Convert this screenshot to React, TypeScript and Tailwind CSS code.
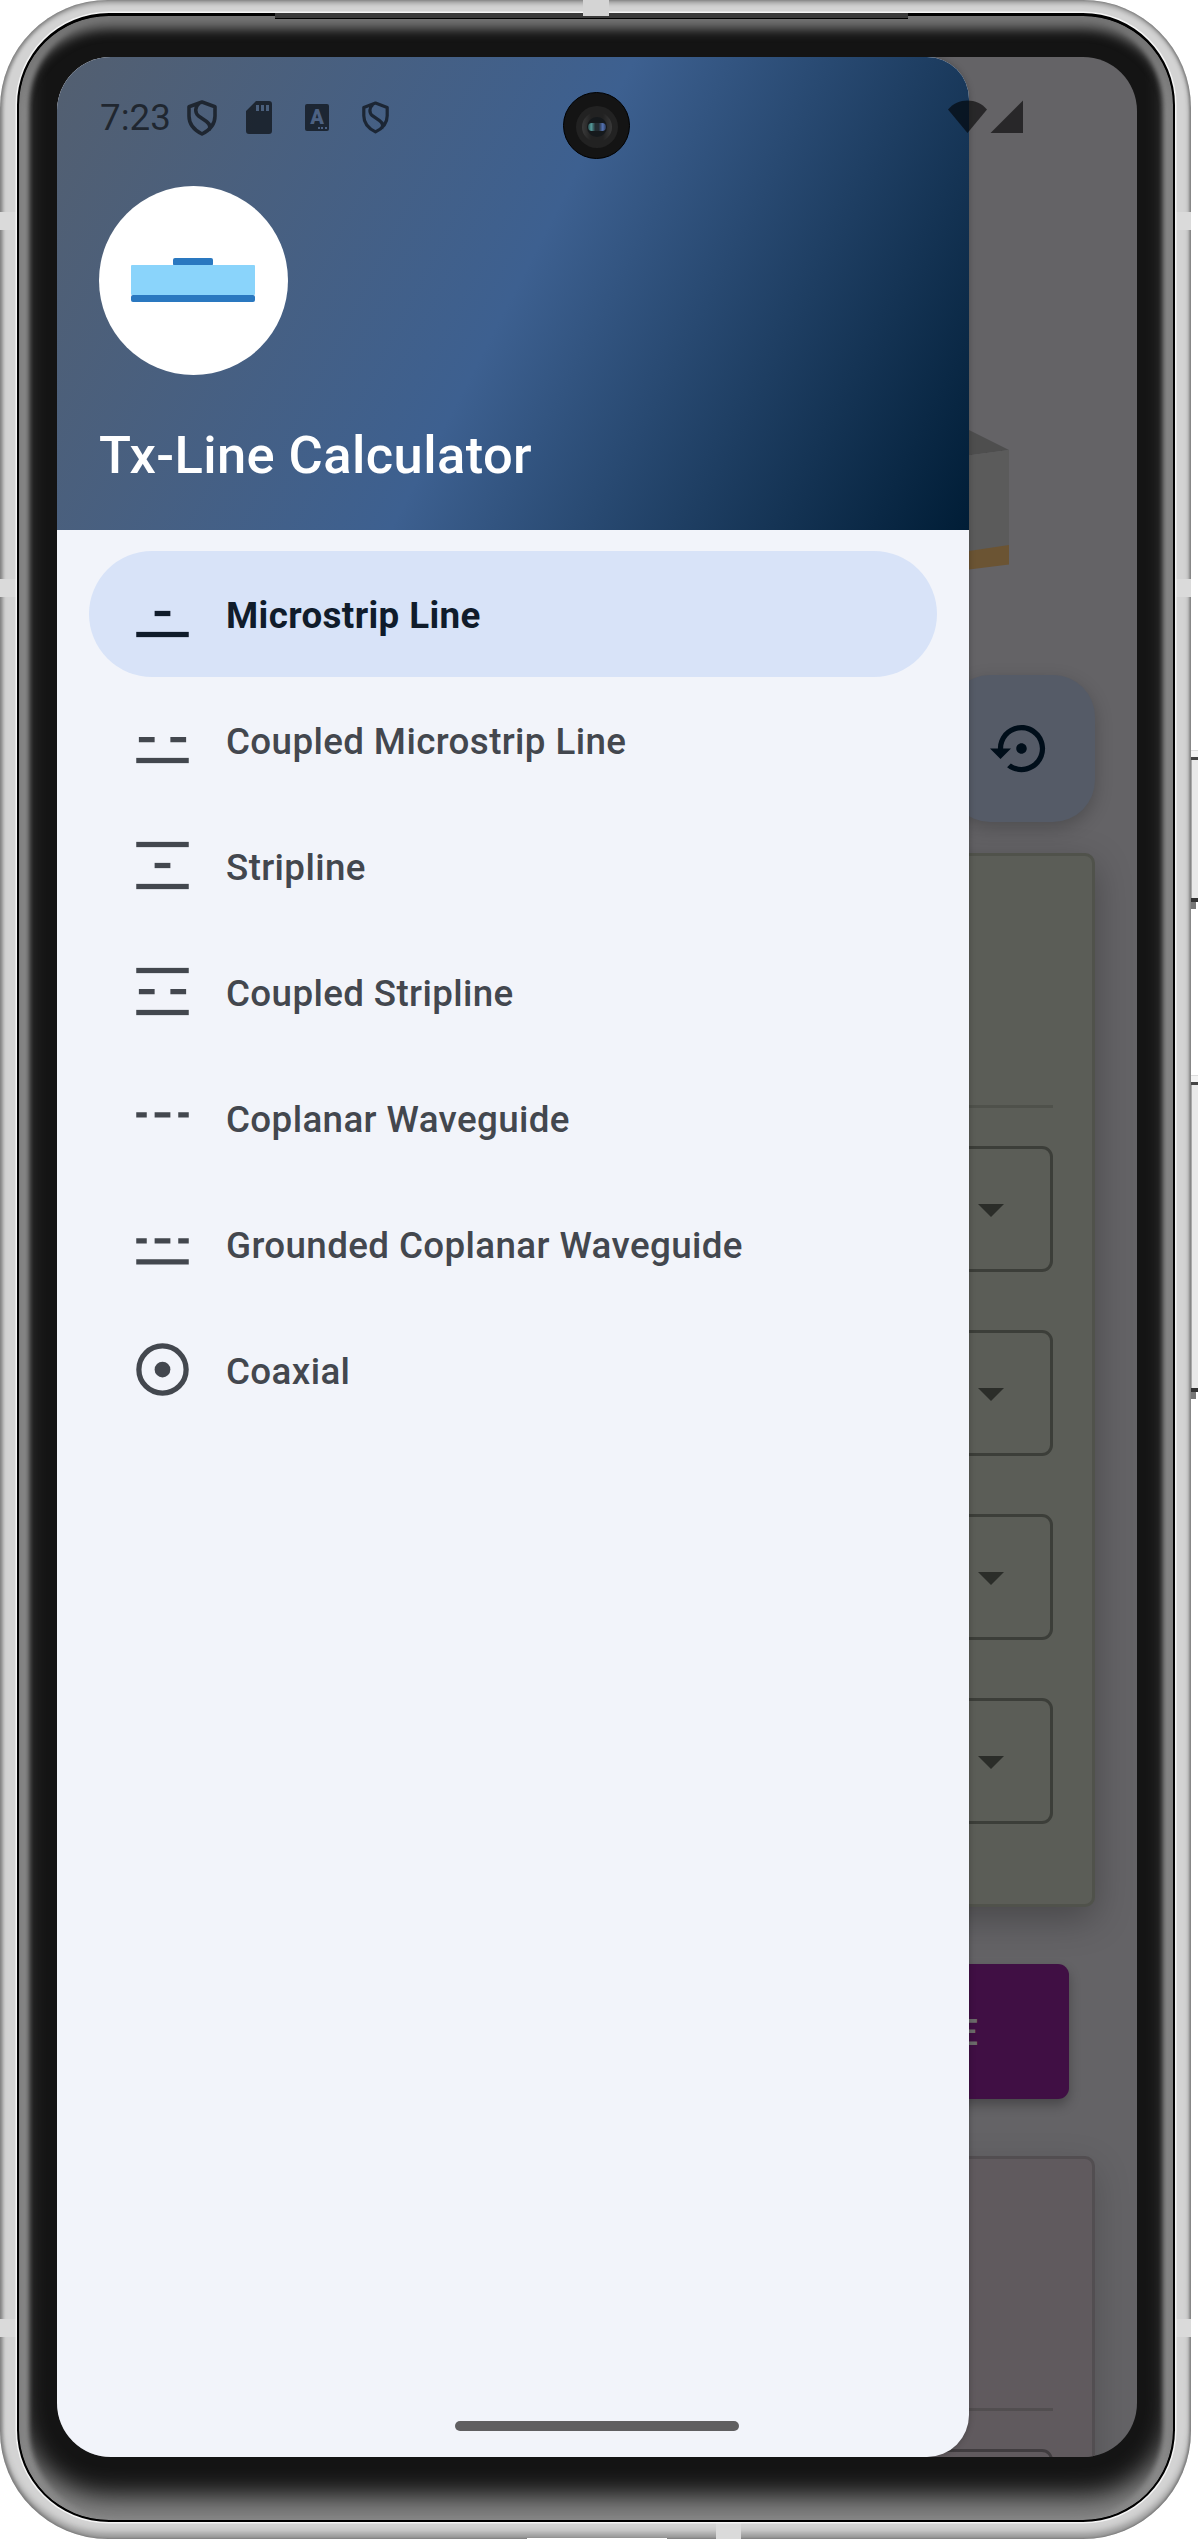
import type { ReactNode } from "react";

type IconProps = { children: ReactNode };

function LineIcon({ children }: IconProps) {
  return (
    <svg viewBox="0 0 24 24" className="-mt-px size-[63px] shrink-0" fill="currentColor">
      {children}
    </svg>
  );
}

const ground = <rect x="2" y="19" width="20" height="2" />;
const roof = <rect x="2" y="3" width="20" height="2" />;
const strip = <rect x="9" y="11" width="6" height="2" />;
const pair = <path d="M3 11h6v2H3zM15 11h6v2h-6z" />;
const coplanar = <path d="M2 10h4v2H2zM9 10h6v2H9zM18 10h4v2h-4z" />;

const items: { label: string; icon: ReactNode }[] = [
  { label: "Microstrip Line", icon: <>{strip}{ground}</> },
  { label: "Coupled Microstrip Line", icon: <>{pair}{ground}</> },
  { label: "Stripline", icon: <>{roof}{strip}{ground}</> },
  { label: "Coupled Stripline", icon: <>{roof}{pair}{ground}</> },
  { label: "Coplanar Waveguide", icon: coplanar },
  {
    label: "Grounded Coplanar Waveguide",
    icon: (
      <>
        {coplanar}
        <rect x="2" y="18" width="20" height="2" />
      </>
    ),
  },
  {
    label: "Coaxial",
    icon: (
      <>
        <circle cx="12" cy="12" r="9" fill="none" stroke="currentColor" strokeWidth="2" />
        <circle cx="12" cy="12" r="3" />
      </>
    ),
  },
];

function Shield({ className }: { className: string }) {
  return (
    <svg viewBox="0 0 30 36" className={className} fill="none" stroke="currentColor" strokeWidth="3.6" strokeLinejoin="round">
      <path d="M15 2 28 6.800V16c0 7.800-5 14-13 18C7 30 2 23.800 2 16V6.800Z M12 3.500C8 7 7.600 12.500 11.500 16l8 5.500c3.600 2.800 4.400 5.300 2.500 8.500" />
    </svg>
  );
}

function StatusBar() {
  return (
    <div className="absolute inset-x-0 top-0 flex h-[122px] pt-[43px] text-black/60">
      <div className="ml-[43px] w-[87px] text-[36.75px] leading-[36px]">7:23</div>
      <Shield className="h-[36px] w-[30px]" />
      <svg viewBox="0 0 26 33" className="ml-[29px] mt-px h-[33px] w-[26px]">
        <path
          fill="currentColor"
          fillRule="evenodd"
          d="M10 0h13a3 3 0 0 1 3 3v27a3 3 0 0 1-3 3H3a3 3 0 0 1-3-3V10ZM10 4v6h3V4Zm5 0v6h3V4Zm5 0v6h3V4Z"
        />
      </svg>
      <div className="relative ml-[33px] mt-[4px] h-[27px] w-[24px] rounded-[2px] bg-black/60">
        <span className="absolute inset-x-0 top-[3px] text-center text-[20px] font-black leading-[20px] text-[#4c6182]">A</span>
        <span className="absolute bottom-[2px] right-[2px] h-[2px] w-[9px] bg-[linear-gradient(90deg,#4c6182_2px,transparent_2px,transparent_3.5px,#4c6182_3.5px,#4c6182_5.5px,transparent_5.5px,transparent_7px,#4c6182_7px)]" />
      </div>
      <Shield className="ml-[33px] mt-px h-[33px] w-[27px]" />
      <svg viewBox="0 0 76 34" className="ml-[559px] h-[34px] w-[76px]" fill="currentColor">
        <path d="M19.500 33 0 9.500C5 3.500 12 .5 19.500.5S34 3.500 39 9.500Z" />
        <path d="M42.500 33 75 .5V33Z" />
      </svg>
    </div>
  );
}

function Camera() {
  return (
    <div className="absolute left-[506px] top-[35px] flex size-[67px] items-center justify-center rounded-full border border-black bg-[#141414] pt-[2px]">
      <div className="flex size-[42px] items-center justify-center rounded-full bg-[#222222]">
        <div className="flex size-[30px] items-center justify-center rounded-full bg-[linear-gradient(90deg,#3a3a3a,#222_30%,#222_70%,#3a3a3a)]">
          <div className="flex size-[20px] items-center justify-center rounded-full bg-[#15191c]">
            <span className="h-[8px] w-[18px] rounded-full bg-[linear-gradient(90deg,#2a4a4a,#559c9d_18%,#232b31_40%,#232b31_60%,#5573b4_82%,#2a3a5a)]" />
          </div>
        </div>
      </div>
    </div>
  );
}

function Field() {
  return (
    <div className="flex h-[126px] shrink-0 items-center justify-end rounded-[11px] border-[3px] border-[#3c3e39] pr-[46px]">
      <svg viewBox="0 0 26 13" className="mt-[3px] h-[13px] w-[26px]">
        <path d="M0 0h26L13 13Z" fill="#2b2d29" />
      </svg>
    </div>
  );
}

function DimmedPage() {
  return (
    <div className="flex h-[2400px] flex-col overflow-hidden bg-[#646366] pl-[41px] pr-[42px]">
      <svg viewBox="0 0 60 144" className="ml-auto mr-[86px] mt-[370px] h-[144px] w-[60px] shrink-0">
        <path d="M0-7 60 23 0 31Z" fill="#4e4e4e" />
        <path d="M0 31 60 23V119L0 127Z" fill="#5b5b5b" />
        <path d="M0 127 60 118V137.500L0 145Z" fill="#6b5433" />
      </svg>
      <div className="ml-auto mt-[104px] flex size-[147px] shrink-0 items-center justify-center rounded-[42px] bg-[#555b67] shadow-[0_6px_18px_rgba(0,0,0,0.22)]">
        <svg viewBox="0 0 24 24" className="size-[63px]" fill="#000e1a">
          <path d="M14 12c0-1.100-.9-2-2-2s-2 .9-2 2 .9 2 2 2 2-.9 2-2zm-2-9c-4.970 0-9 4.030-9 9H0l4 4 4-4H5c0-3.870 3.130-7 7-7s7 3.130 7 7-3.130 7-7 7c-1.510 0-2.910-.49-4.060-1.300l-1.420 1.440C8.040 20.300 9.940 21 12 21c4.970 0 9-4.030 9-9s-4.030-9-9-9z" />
        </svg>
      </div>
      <div className="mt-[31px] flex h-[1054px] shrink-0 flex-col gap-[58px] rounded-[10px] border-[3px] border-[#50524b] bg-[#5b5d57] pl-[40px] pr-[39px] pt-[249px] shadow-[0_12px_36px_rgba(0,0,0,0.28)]">
        <div className="mb-[-20px] h-[3px] shrink-0 bg-[#4f514b]" />
        <Field />
        <Field />
        <Field />
        <Field />
      </div>
      <div className="mx-[26px] mt-[57px] flex h-[135px] shrink-0 items-center justify-end rounded-[11px] bg-[#400f44] pr-[91px] pt-[3px] text-[36.75px] font-medium text-[#6b6b6b] shadow-[0_6px_12px_rgba(0,0,0,0.28)]">
        E
      </div>
      <div className="mt-[57px] flex h-[420px] shrink-0 flex-col gap-[38px] rounded-[10px] border-[3px] border-[#524e51] bg-[#605a5e] pl-[40px] pr-[39px] pt-[249px] shadow-[0_12px_36px_rgba(0,0,0,0.18)]">
        <div className="h-[3px] shrink-0 bg-[#524e50]" />
        <div className="h-[126px] shrink-0 rounded-[11px] border-[3px] border-[#403c3f]" />
      </div>
    </div>
  );
}

function Drawer() {
  return (
    <div className="absolute inset-y-0 left-0 flex w-[912px] flex-col overflow-hidden rounded-r-[42px] bg-[#f2f4fa] shadow-[0_0_6px_rgba(0,0,0,0.25)]">
      <div className="flex h-[473px] shrink-0 flex-col bg-[linear-gradient(117.4deg,#535f70,#3d6090_50%,#001d36)] px-[42px] pt-[129px]">
        <div className="flex size-[189px] flex-col items-center rounded-full bg-white pr-[2px] pt-[72px]">
          <div className="h-[8px] w-[40px] rounded-[2px] bg-[#2a78c0]" />
          <div className="-mt-px h-[30px] w-[124px] rounded-[1px] bg-[#8ad4fb]" />
          <div className="h-[7px] w-[124px] rounded-[2px] bg-[#2a78c0]" />
        </div>
        <div className="mt-[49px] text-[52.5px] font-medium leading-[62px] tracking-[0.4px] text-white">Tx-Line Calculator</div>
      </div>
      <nav className="flex flex-col px-[32px] pt-[21px]">
        {items.map(({ label, icon }, i) => (
          <div
            key={label}
            className={
              i === 0
                ? "flex h-[126px] items-center rounded-full bg-[#d8e3f8] pl-[42px] font-bold text-[#101c2b]"
                : "flex h-[126px] items-center rounded-full pl-[42px] font-medium text-[#43474e]"
            }
          >
            <LineIcon>{icon}</LineIcon>
            <span className="ml-[32px] pt-[4px] text-[36.75px] leading-[44px] tracking-[0.38px]">{label}</span>
          </div>
        ))}
      </nav>
    </div>
  );
}

function SideKey({ className, bodyClass }: { className: string; bodyClass: string }) {
  return (
    <div className={className}>
      <div className="h-[7px] border-t border-[#ddd] bg-[#f4f4f4]" />
      <div className="h-[3px] bg-[#444]" />
      <div className={bodyClass} />
      <div className="h-[4px] bg-[#333]" />
      <div className="h-[7px] w-[5px] bg-[#777]" />
    </div>
  );
}

export default function App() {
  return (
    <div className="relative h-[2539px] w-[1198px] overflow-hidden bg-white font-[Roboto,sans-serif]">
      <SideKey className="absolute left-[1191px] top-[750px] w-[7px]" bodyClass="h-[138px] border-l border-[#aaa] bg-[#e9e9e9]" />
      <SideKey className="absolute left-[1191px] top-[1075px] w-[7px]" bodyClass="h-[303px] border-l border-[#aaa] bg-[#e9e9e9]" />
      <div className="relative h-[2539px] w-[1191px] overflow-hidden rounded-[108px] bg-[#d3d3d3] pl-[17px] pr-[16px] pt-[13px] shadow-[inset_0_3px_5px_rgba(0,0,0,0.3),inset_0_-6px_7px_rgba(0,0,0,0.3),inset_3px_0_3px_rgba(0,0,0,0.16),inset_-2px_0_2px_rgba(0,0,0,0.16)]">
        {["top-[212px]", "top-[579px]", "top-[2319px]"].map((top) => (
          <div key={top} className={`absolute inset-x-0 h-[18px] bg-[#dadada] ${top}`} />
        ))}
        <div className="absolute left-[527px] top-[2538px] h-px w-[140px] bg-white" />
        <div className="absolute left-[716px] top-[2521px] h-[18px] w-[25px] bg-[#dadada]" />
        <div className="relative h-[2509px] rounded-[92px] border-2 border-t-[3px] border-black bg-[#141414] p-[38px] pt-[41px] shadow-[0_0_0_1.5px_#f4f4f4,inset_0_13px_12px_#747474,inset_10px_0_5px_#8a8a8a,inset_-10px_0_5px_#8a8a8a,inset_0_-24px_26px_#858585]">
          <div className="absolute left-[256px] top-[-3px] h-[6px] w-[633px] border-b border-black bg-[#3a3a3a]" />
          <div className="relative h-[2400px] w-[1080px] overflow-hidden rounded-[54px]">
            <DimmedPage />
            <Drawer />
            <StatusBar />
            <Camera />
            <div className="absolute bottom-[26px] left-[398px] h-[10px] w-[284px] rounded-full bg-[#605f61]" />
          </div>
        </div>
        <div className="absolute left-[583px] top-0 h-[16px] w-[26px] bg-[#d4d4d4]" />
      </div>
    </div>
  );
}
